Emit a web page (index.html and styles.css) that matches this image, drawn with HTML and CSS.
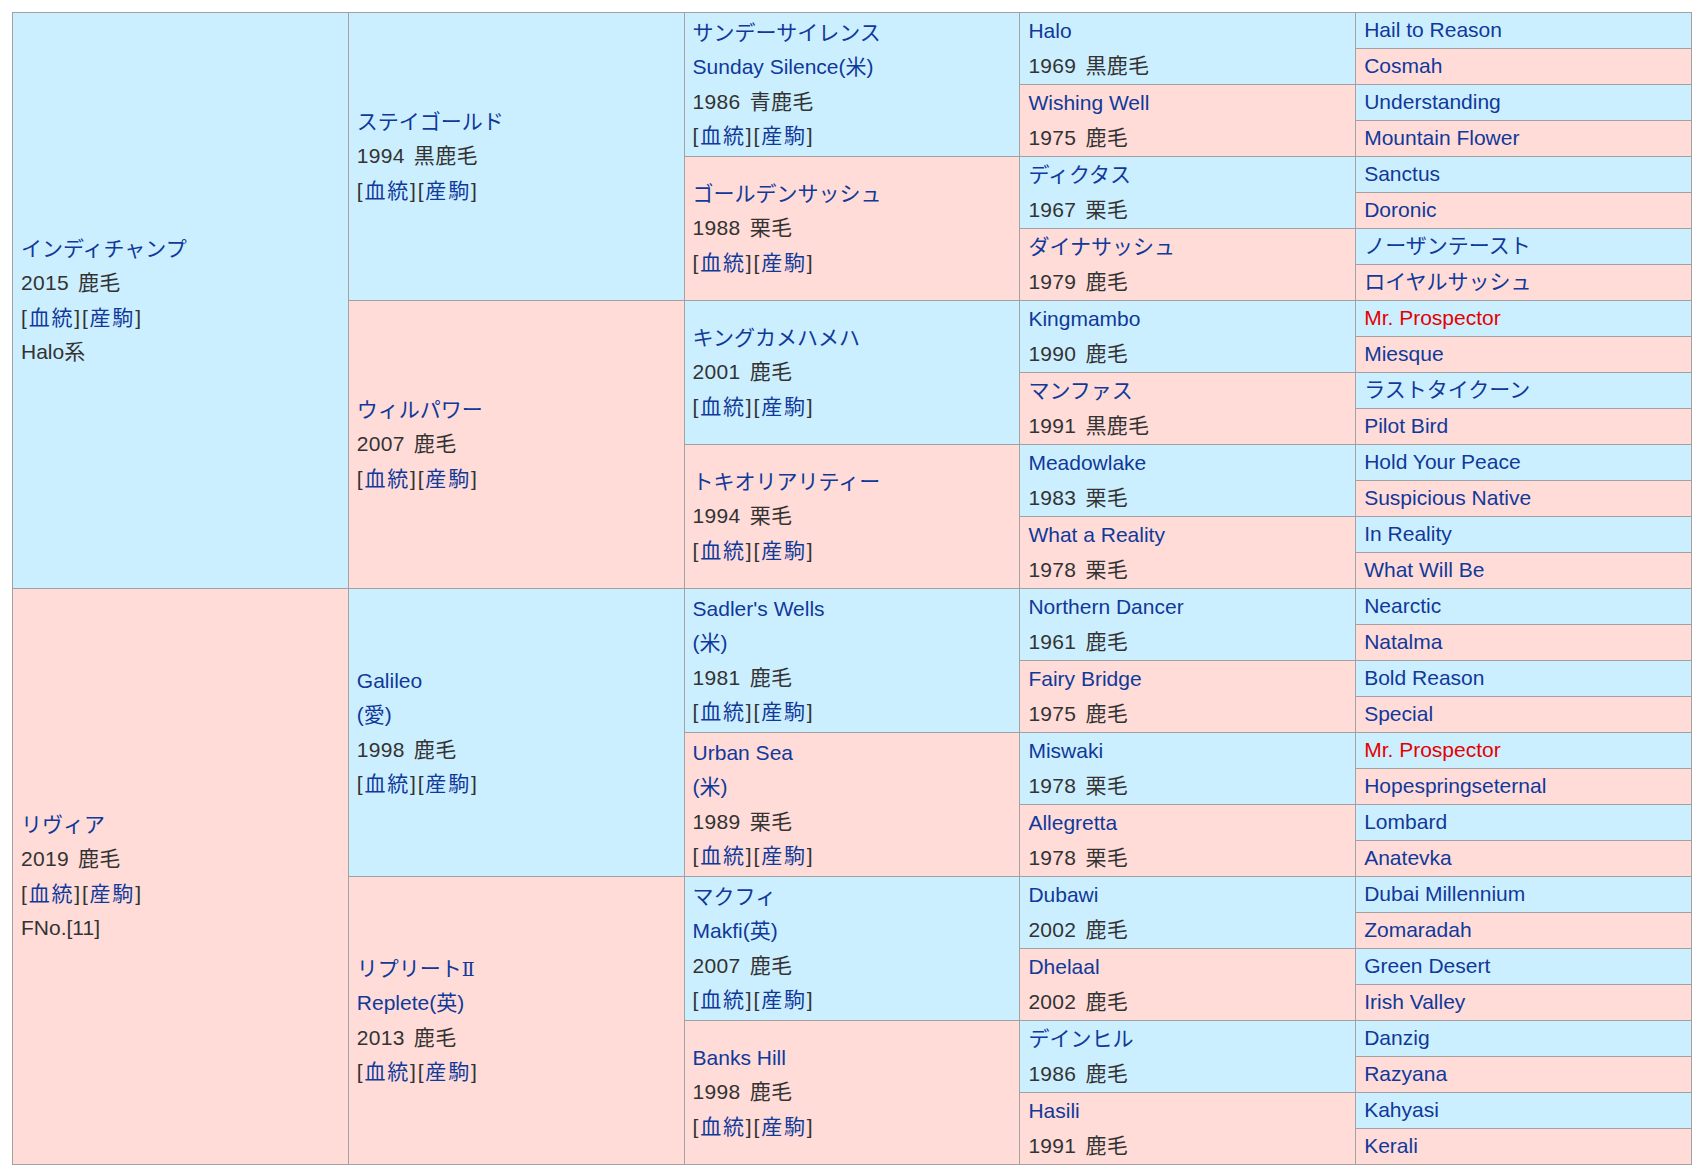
FILE: index.html
```html
<!DOCTYPE html>
<html lang="ja">
<head>
<meta charset="utf-8">
<title>血統表</title>
<link rel="stylesheet" href="styles.css">
</head>
<body>
<div class="ped">
  <!-- generation 1 -->
  <div class="cell s16 m"><a href="#">インディチャンプ</a><span class="yr">2015 鹿毛</span><span class="lk">[<a href="#">血統</a>][<a href="#">産駒</a>]</span><span>Halo系</span></div>
  <div class="cell s16 f"><a href="#">リヴィア</a><span class="yr">2019 鹿毛</span><span class="lk">[<a href="#">血統</a>][<a href="#">産駒</a>]</span><span>FNo.[11]</span></div>
  <!-- generation 2 -->
  <div class="cell s8 m"><a href="#">ステイゴールド</a><span class="yr">1994 黒鹿毛</span><span class="lk">[<a href="#">血統</a>][<a href="#">産駒</a>]</span></div>
  <div class="cell s8 f"><a href="#">ウィルパワー</a><span class="yr">2007 鹿毛</span><span class="lk">[<a href="#">血統</a>][<a href="#">産駒</a>]</span></div>
  <div class="cell s8 m"><a href="#">Galileo</a><a href="#">(愛)</a><span class="yr">1998 鹿毛</span><span class="lk">[<a href="#">血統</a>][<a href="#">産駒</a>]</span></div>
  <div class="cell s8 f"><a href="#">リプリート<span class="roman">Ⅱ</span></a><a href="#">Replete(英)</a><span class="yr">2013 鹿毛</span><span class="lk">[<a href="#">血統</a>][<a href="#">産駒</a>]</span></div>
  <!-- generation 3 -->
  <div class="cell s4 m"><a href="#">サンデーサイレンス</a><a href="#">Sunday Silence(米)</a><span class="yr">1986 青鹿毛</span><span class="lk">[<a href="#">血統</a>][<a href="#">産駒</a>]</span></div>
  <div class="cell s4 f"><a href="#">ゴールデンサッシュ</a><span class="yr">1988 栗毛</span><span class="lk">[<a href="#">血統</a>][<a href="#">産駒</a>]</span></div>
  <div class="cell s4 m"><a href="#">キングカメハメハ</a><span class="yr">2001 鹿毛</span><span class="lk">[<a href="#">血統</a>][<a href="#">産駒</a>]</span></div>
  <div class="cell s4 f"><a href="#">トキオリアリティー</a><span class="yr">1994 栗毛</span><span class="lk">[<a href="#">血統</a>][<a href="#">産駒</a>]</span></div>
  <div class="cell s4 m"><a href="#">Sadler's Wells</a><a href="#">(米)</a><span class="yr">1981 鹿毛</span><span class="lk">[<a href="#">血統</a>][<a href="#">産駒</a>]</span></div>
  <div class="cell s4 f"><a href="#">Urban Sea</a><a href="#">(米)</a><span class="yr">1989 栗毛</span><span class="lk">[<a href="#">血統</a>][<a href="#">産駒</a>]</span></div>
  <div class="cell s4 m"><a href="#">マクフィ</a><a href="#">Makfi(英)</a><span class="yr">2007 鹿毛</span><span class="lk">[<a href="#">血統</a>][<a href="#">産駒</a>]</span></div>
  <div class="cell s4 f"><a href="#">Banks Hill</a><span class="yr">1998 鹿毛</span><span class="lk">[<a href="#">血統</a>][<a href="#">産駒</a>]</span></div>
  <!-- generation 4 -->
  <div class="cell s2 m"><a href="#">Halo</a><span class="yr">1969 黒鹿毛</span></div>
  <div class="cell s2 f"><a href="#">Wishing Well</a><span class="yr">1975 鹿毛</span></div>
  <div class="cell s2 m"><a href="#">ディクタス</a><span class="yr">1967 栗毛</span></div>
  <div class="cell s2 f"><a href="#">ダイナサッシュ</a><span class="yr">1979 鹿毛</span></div>
  <div class="cell s2 m"><a href="#">Kingmambo</a><span class="yr">1990 鹿毛</span></div>
  <div class="cell s2 f"><a href="#">マンファス</a><span class="yr">1991 黒鹿毛</span></div>
  <div class="cell s2 m"><a href="#">Meadowlake</a><span class="yr">1983 栗毛</span></div>
  <div class="cell s2 f"><a href="#">What a Reality</a><span class="yr">1978 栗毛</span></div>
  <div class="cell s2 m"><a href="#">Northern Dancer</a><span class="yr">1961 鹿毛</span></div>
  <div class="cell s2 f"><a href="#">Fairy Bridge</a><span class="yr">1975 鹿毛</span></div>
  <div class="cell s2 m"><a href="#">Miswaki</a><span class="yr">1978 栗毛</span></div>
  <div class="cell s2 f"><a href="#">Allegretta</a><span class="yr">1978 栗毛</span></div>
  <div class="cell s2 m"><a href="#">Dubawi</a><span class="yr">2002 鹿毛</span></div>
  <div class="cell s2 f"><a href="#">Dhelaal</a><span class="yr">2002 鹿毛</span></div>
  <div class="cell s2 m"><a href="#">デインヒル</a><span class="yr">1986 鹿毛</span></div>
  <div class="cell s2 f"><a href="#">Hasili</a><span class="yr">1991 鹿毛</span></div>
  <!-- generation 5 -->
  <div class="cell m"><a href="#">Hail to Reason</a></div>
  <div class="cell f"><a href="#">Cosmah</a></div>
  <div class="cell m"><a href="#">Understanding</a></div>
  <div class="cell f"><a href="#">Mountain Flower</a></div>
  <div class="cell m"><a href="#">Sanctus</a></div>
  <div class="cell f"><a href="#">Doronic</a></div>
  <div class="cell m"><a href="#">ノーザンテースト</a></div>
  <div class="cell f"><a href="#">ロイヤルサッシュ</a></div>
  <div class="cell m"><a href="#" class="cross">Mr. Prospector</a></div>
  <div class="cell f"><a href="#">Miesque</a></div>
  <div class="cell m"><a href="#">ラストタイクーン</a></div>
  <div class="cell f"><a href="#">Pilot Bird</a></div>
  <div class="cell m"><a href="#">Hold Your Peace</a></div>
  <div class="cell f"><a href="#">Suspicious Native</a></div>
  <div class="cell m"><a href="#">In Reality</a></div>
  <div class="cell f"><a href="#">What Will Be</a></div>
  <div class="cell m"><a href="#">Nearctic</a></div>
  <div class="cell f"><a href="#">Natalma</a></div>
  <div class="cell m"><a href="#">Bold Reason</a></div>
  <div class="cell f"><a href="#">Special</a></div>
  <div class="cell m"><a href="#" class="cross">Mr. Prospector</a></div>
  <div class="cell f"><a href="#">Hopespringseternal</a></div>
  <div class="cell m"><a href="#">Lombard</a></div>
  <div class="cell f"><a href="#">Anatevka</a></div>
  <div class="cell m"><a href="#">Dubai Millennium</a></div>
  <div class="cell f"><a href="#">Zomaradah</a></div>
  <div class="cell m"><a href="#">Green Desert</a></div>
  <div class="cell f"><a href="#">Irish Valley</a></div>
  <div class="cell m"><a href="#">Danzig</a></div>
  <div class="cell f"><a href="#">Razyana</a></div>
  <div class="cell m"><a href="#">Kahyasi</a></div>
  <div class="cell f"><a href="#">Kerali</a></div>
</div>
</body>
</html>
```
FILE: styles.css
```css
html, body {
  margin: 0;
  padding: 0;
  background: #ffffff;
}
body {
  padding: 12px;
  font-family: "Liberation Sans", "Noto Sans CJK JP", sans-serif;
  font-size: 21px;
  color: #333333;
}
.ped {
  width: 1678px;
  display: grid;
  grid-template-columns: repeat(5, 1fr);
  grid-template-rows: repeat(32, 35px);
  grid-auto-flow: column;
  gap: 1px;
  background: #a2a2a2;
  border: 1px solid #a2a2a2;
}
.cell {
  display: flex;
  flex-direction: column;
  justify-content: center;
  padding: 0 8px;
  line-height: 34.5px;
  white-space: nowrap;
  overflow: hidden;
}
.cell > a, .cell > span {
  display: block;
}
.yr {
  word-spacing: 3px;
  letter-spacing: 0.3px;
}
.lk {
  letter-spacing: 1.8px;
}
.roman {
  font-family: "DejaVu Serif", "Liberation Serif", serif;
  font-size: 19px;
}
.m { background: #ccefff; }
.f { background: #ffdcd8; }
.s16 { grid-row: span 16; }
.s8 { grid-row: span 8; }
.s4 { grid-row: span 4; }
.s2 { grid-row: span 2; }
a {
  color: #10399a;
  text-decoration: none;
}
a.cross {
  color: #e60000;
}
```
